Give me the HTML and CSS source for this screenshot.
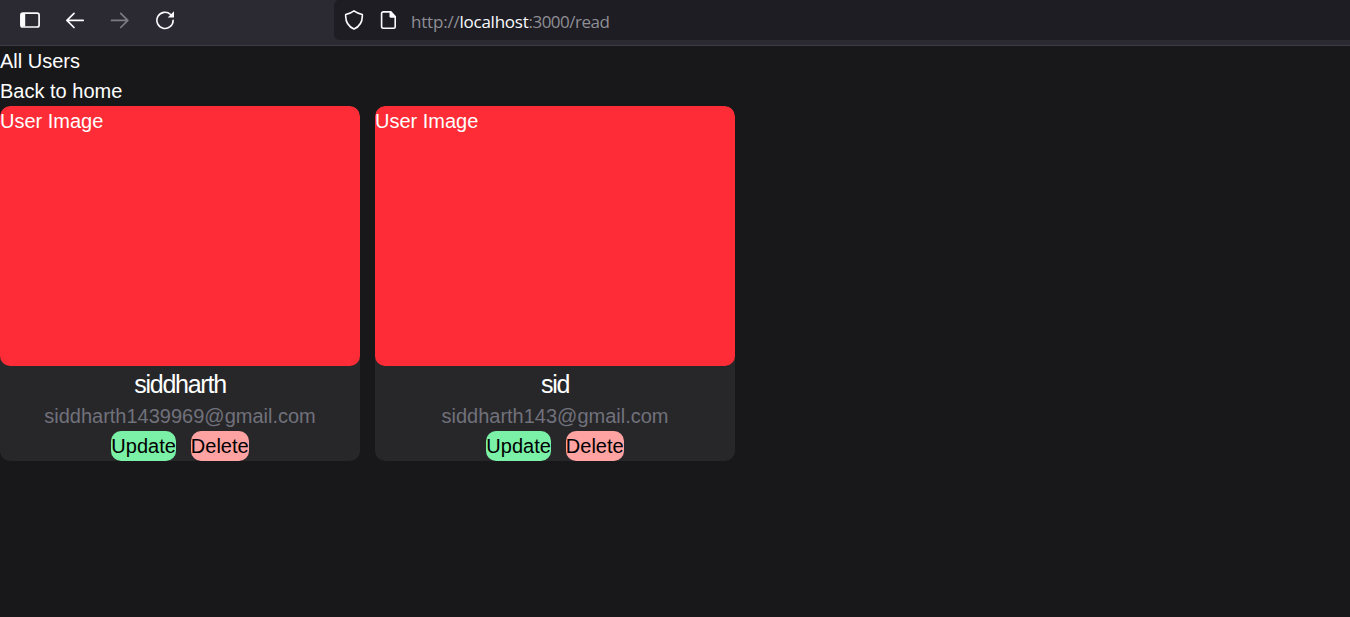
FILE: index.html
```html
<!DOCTYPE html>
<html lang="en">
<head>
<meta charset="utf-8">
<title>All Users</title>
<link rel="stylesheet" href="styles.css">
</head>
<body>
<header class="toolbar">
  <nav class="nav">
    <svg class="icon" viewBox="0 0 20 20"><rect x="0.9" y="3.2" width="18.2" height="13.800" rx="2" fill="none" stroke="currentColor" stroke-width="1.7"/><path d="M1 4h4.2v12.5H1z" fill="currentColor"/></svg>
    <svg class="icon" viewBox="0 0 20 20"><path d="M18.2 10.400H2M9 3.300L1.900 10.400 9 17.500" fill="none" stroke="currentColor" stroke-width="1.7" stroke-linecap="round" stroke-linejoin="round"/></svg>
    <svg class="icon icon-off" viewBox="0 0 20 20"><path d="M1.500 10.400h16.200M10.700 3.300l7.100 7.100-7.100 7.100" fill="none" stroke="currentColor" stroke-width="1.7" stroke-linecap="round" stroke-linejoin="round"/></svg>
    <svg class="icon" viewBox="0 0 20 20"><path d="M15.600 4.500A8.100 8.100 0 1 0 18.100 10.200" fill="none" stroke="currentColor" stroke-width="1.6" stroke-linecap="round"/><path d="M19 1.300v5.700a.6.6 0 0 1-.6.6h-5.700z" fill="currentColor"/></svg>
  </nav>
  <div class="address">
    <svg class="icon" viewBox="0 0 20 20"><path d="M10 .9C7.600 2.700 4.500 4 1.700 4.500C1.300 11 4.300 16.500 10 19.100C15.700 16.500 18.700 11 18.300 4.500C15.500 4 12.400 2.700 10 .9z" fill="none" stroke="currentColor" stroke-width="1.6" stroke-linejoin="round"/></svg>
    <svg class="icon" viewBox="0 0 20 20"><path d="M12 1.900H4.300a1.700 1.700 0 0 0-1.700 1.700v12.900a1.700 1.700 0 0 0 1.700 1.700h10.200a1.700 1.700 0 0 0 1.700-1.700V6.800z" fill="none" stroke="currentColor" stroke-width="1.6" stroke-linejoin="round"/><path d="M10.500 1.500h1.500l5 4.900v1.300h-5a1.500 1.500 0 0 1-1.500-1.500z" fill="currentColor"/></svg>
    <span class="url">http://<span class="host">localhost</span><span class="path">:3000/read</span></span>
  </div>
</header>
<main class="page">
  <div>All Users</div>
  <a class="home">Back to home</a>
  <div class="users">
    <article class="card">
      <div class="photo">User Image</div>
      <h2 class="name">siddharth</h2>
      <div class="email">siddharth1439969@gmail.com</div>
      <div class="actions"><a class="button update">Update</a><a class="button delete">Delete</a></div>
    </article>
    <article class="card">
      <div class="photo">User Image</div>
      <h2 class="name">sid</h2>
      <div class="email">siddharth143@gmail.com</div>
      <div class="actions"><a class="button update">Update</a><a class="button delete">Delete</a></div>
    </article>
  </div>
</main>
</body>
</html>
```
FILE: styles.css
```css
* { box-sizing: border-box; }
body {
  margin: 0;
  min-height: 100vh;
  overflow: hidden;
  background: #18181a;
  color: #fff;
  font: 20px/30px "Liberation Sans", Arial, sans-serif;
}
.toolbar {
  display: flex;
  height: 46px;
  background: #2b2a33;
  border-bottom: 1px solid #3d3c43;
  color: #fbfbfe;
}
.nav {
  display: flex;
  gap: 25px;
  width: 334px;
  padding: 10px 20px;
}
.icon { width: 20px; height: 20px; flex: none; }
.icon-off { color: #7c7b82; }
.address {
  display: flex;
  flex: 1;
  height: 40px;
  padding: 10px 10px 0;
  background: #1e1d24;
  border-radius: 5px 0 0 5px;
}
.address .icon + .icon { margin-left: 15px; }
.url {
  margin: 1px 0 0 12px;
  color: #8f8f94;
  font: 17px/22px "Open Sans", "Noto Sans", sans-serif;
  letter-spacing: -0.2px;
  white-space: nowrap;
}
.host { color: #fbfbfe; letter-spacing: -0.25px; }
.path { letter-spacing: -0.5px; }
.home { display: block; }
.users { display: flex; gap: 15px; }
.card {
  width: 360px;
  overflow: hidden;
  background: #27272a;
  border-radius: 10px;
  text-align: center;
}
.photo {
  height: 260px;
  background: #fe2c36;
  border-radius: 10px;
  text-align: left;
}
.name {
  margin: 0;
  padding-top: 2px;
  font-size: 25px;
  font-weight: 400;
  line-height: 33px;
  letter-spacing: -0.05em;
}
.email { color: #71717b; }
.actions { display: flex; justify-content: center; gap: 15px; }
.button { border-radius: 10px; color: #000; }
.update { background: #7bf1a8; }
.delete { background: #ffa2a2; }
```
